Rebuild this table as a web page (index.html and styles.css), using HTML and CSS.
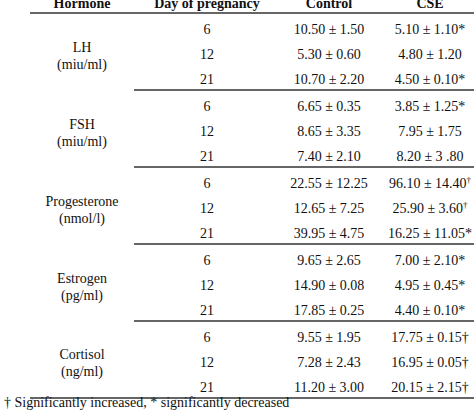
FILE: index.html
```html
<!DOCTYPE html>
<html>
<head>
<meta charset="utf-8">
<link rel="stylesheet" href="styles.css">
</head>
<body>
<div class="wrap">
<table class="data">
  <thead>
    <tr>
      <th class="c-h">Hormone</th>
      <th class="c-d">Day of pregnancy</th>
      <th class="c-c">Control</th>
      <th class="c-s">CSE</th>
    </tr>
  </thead>
  <tbody>
    <tr><td class="label" rowspan="3">LH<br>(miu/ml)</td><td>6</td><td>10.50 ± 1.50</td><td>5.10 ± 1.10*</td></tr>
    <tr><td>12</td><td>5.30 ± 0.60</td><td>4.80 ± 1.20</td></tr>
    <tr class="end"><td>21</td><td>10.70 ± 2.20</td><td>4.50 ± 0.10*</td></tr>

    <tr><td class="label" rowspan="3">FSH<br>(miu/ml)</td><td>6</td><td>6.65 ± 0.35</td><td>3.85 ± 1.25*</td></tr>
    <tr><td>12</td><td>8.65 ± 3.35</td><td>7.95 ± 1.75</td></tr>
    <tr class="end"><td>21</td><td>7.40 ± 2.10</td><td>8.20 ± 3 .80</td></tr>

    <tr><td class="label" rowspan="3">Progesterone<br>(nmol/l)</td><td>6</td><td>22.55 ± 12.25</td><td>96.10 ± 14.40<sup class="dg">†</sup></td></tr>
    <tr><td>12</td><td>12.65 ± 7.25</td><td>25.90 ± 3.60<sup class="dg">†</sup></td></tr>
    <tr class="end"><td>21</td><td>39.95 ± 4.75</td><td>16.25 ± 11.05*</td></tr>

    <tr><td class="label" rowspan="3">Estrogen<br>(pg/ml)</td><td>6</td><td>9.65 ± 2.65</td><td>7.00 ± 2.10*</td></tr>
    <tr><td>12</td><td>14.90 ± 0.08</td><td>4.95 ± 0.45*</td></tr>
    <tr class="end"><td>21</td><td>17.85 ± 0.25</td><td>4.40 ± 0.10*</td></tr>

    <tr><td class="label last" rowspan="3">Cortisol<br>(ng/ml)</td><td>6</td><td>9.55 ± 1.95</td><td>17.75 ± 0.15†</td></tr>
    <tr><td>12</td><td>7.28 ± 2.43</td><td>16.95 ± 0.05†</td></tr>
    <tr class="end"><td>21</td><td>11.20 ± 3.00</td><td>20.15 ± 2.15†</td></tr>
  </tbody>
</table>
<p class="note">† Significantly increased, * significantly decreased</p>
</div>
</body>
</html>
```

FILE: styles.css
```css
html, body {
  margin: 0;
  padding: 0;
  overflow: hidden;
  background: #fff;
}
body {
  font-family: "Liberation Serif", "Times New Roman", serif;
  font-size: 14px;
  color: #111;
  width: 474px;
  height: 413px;
}
.wrap {
  width: 520px;
}
.data {
  border-collapse: separate;
  border-spacing: 0;
  margin: -4px 0 0 30px;
  width: 452px;
  table-layout: fixed;
}
.data th {
  font-weight: bold;
  line-height: 16px;
  padding: 0;
  text-align: center;
  border-bottom: 2px solid #666;
}
.c-h { width: 104px; }
.c-d { width: 146px; }
.c-c { width: 98px; }
.c-s { width: 104px; }
.data td {
  line-height: 16px;
  padding: 8px 0 1px;
  text-align: center;
  vertical-align: middle;
  white-space: nowrap;
}
.data td.label {
  line-height: 17px;
  padding: 8px 0 1px;
}
.data tr.end td {
  border-bottom: 2px solid #666;
}
.data td.label.last {
  border-bottom: 2px solid #666;
}
.dg {
  font-size: 9px;
  line-height: 0;
  vertical-align: 5px;
}
.note {
  margin: -4px 0 0 4px;
  line-height: 16px;
  white-space: nowrap;
}
```
